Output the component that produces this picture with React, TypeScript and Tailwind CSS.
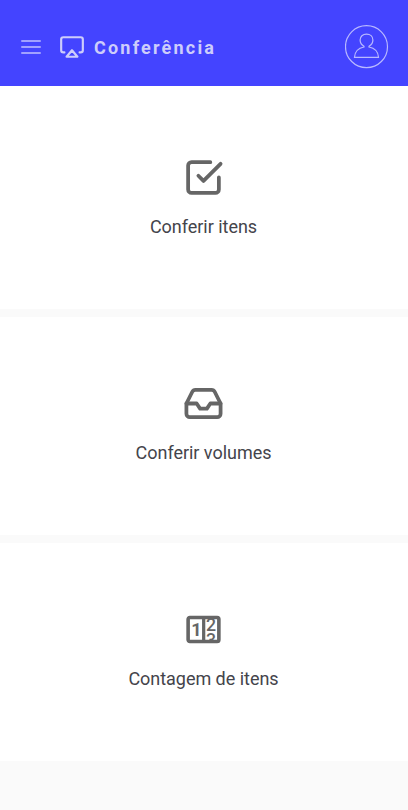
import React from 'react';
import { FiAirplay, FiCheckSquare, FiInbox } from 'react-icons/fi';

type MenuCard = {
  label: string;
  icon: React.ReactNode;
};

function CounterIcon({ size }: { size: number }) {
  return (
    <svg width={size} height={size} viewBox="0 0 24 24" fill="currentColor" className="font-['Roboto',sans-serif] font-bold">
      <clipPath id="reel">
        <rect x="13" y="5.6" width="7" height="12.8" />
      </clipPath>
      <rect x="3" y="5" width="18" height="14" rx="1" fill="none" stroke="currentColor" strokeWidth="2.1" />
      <path d="M12.1 5v14" stroke="currentColor" strokeWidth="1.9" />
      <text x="4.9" y="15.9" fontSize="10.6">1</text>
      <text fontSize="10.4" className="font-medium" clipPath="url(#reel)">
        <tspan x="13.5" y="12.7">2</tspan>
        <tspan x="13.5" y="21.8">3</tspan>
      </text>
    </svg>
  );
}

function UserIcon() {
  return (
    <svg width="44" height="44" viewBox="0 0 44 44" fill="none" stroke="currentColor" strokeWidth="1.2">
      <circle cx="21.5" cy="21.7" r="21" />
      <path d="M19 21.3c-2.4-1.3-3.9-3.4-3.9-6.200 0-3.6 2.700-6 6.400-6s6.400 2.400 6.400 6c0 2.800-1.500 4.900-3.900 6.200v.7c5.400 1 9.100 4.400 9.500 10.300h-24c.4-5.900 4.100-9.300 9.500-10.300z" />
    </svg>
  );
}

const cards: MenuCard[] = [
  { label: 'Conferir itens', icon: <FiCheckSquare size={41} strokeWidth={2.2} /> },
  { label: 'Conferir volumes', icon: <FiInbox size={41} strokeWidth={2.2} /> },
  { label: 'Contagem de itens', icon: <CounterIcon size={41} /> },
];

export default function App() {
  return (
    <div className="h-[810px] overflow-hidden bg-[#fafafa] font-['Roboto',sans-serif]">
      <header className="flex h-[86px] items-center bg-[#4444ff] pt-2 pr-[19px] pl-[21px]">
        <div className="flex w-5 flex-col gap-1">
          <span className="h-0.5 rounded-full bg-[#a1a1ff]" />
          <span className="h-0.5 rounded-full bg-[#a1a1ff]" />
          <span className="h-0.5 rounded-full bg-[#a1a1ff]" />
        </div>
        <FiAirplay size={26} className="ml-[17.5px] text-[#cdcdfb]" />
        <h1 className="ml-[9.5px] pt-px text-[18px] font-bold tracking-[2.2px] text-[#cdcdfb]">Conferência</h1>
        <button type="button" className="-mt-px ml-auto text-[#b9b9ff]">
          <UserIcon />
        </button>
      </header>

      <main className="flex flex-col gap-2">
        {cards.map((card) => (
          <button
            key={card.label}
            type="button"
            className="flex h-[218px] flex-col items-center justify-center gap-[17px] bg-white pr-px pb-1 text-[#666] first:h-[223px] first:pt-[5px]"
          >
            {card.icon}
            <span className="text-[18px] leading-6 tracking-[-0.03px] text-[#44444b]">{card.label}</span>
          </button>
        ))}
      </main>
    </div>
  );
}
